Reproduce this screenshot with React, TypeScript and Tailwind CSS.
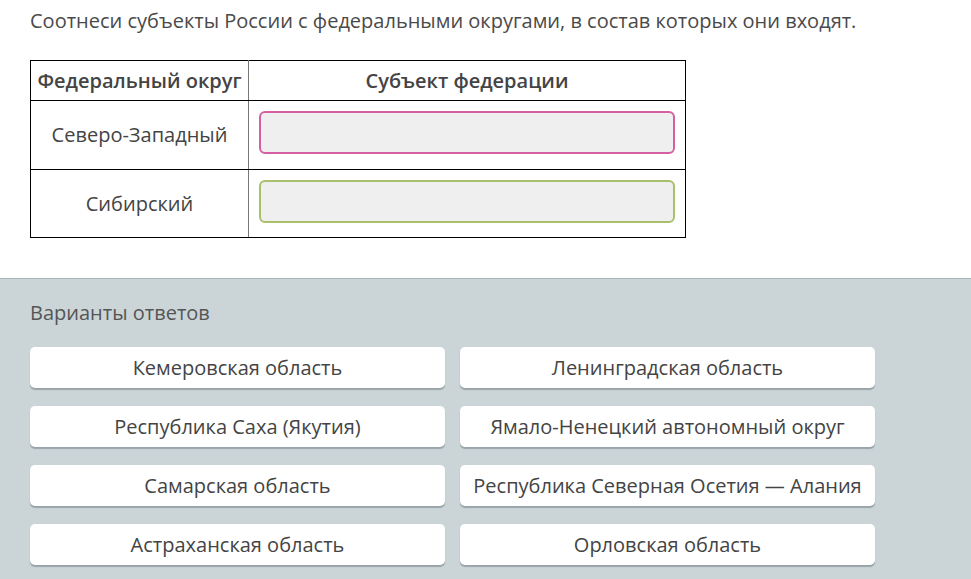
const options: [string, string][] = [
  ["Кемеровская область", "Ленинградская область"],
  ["Республика Саха (Якутия)", "Ямало-Ненецкий автономный округ"],
  ["Самарская область", "Республика Северная Осетия — Алания"],
  ["Астраханская область", "Орловская область"],
];

function Option({ label }: { label: string }) {
  return (
    <div className="h-[41px] w-[415px] flex items-center justify-center bg-white rounded-[5px] shadow-[0_2px_1px_rgba(90,105,110,0.45)] text-[20px] text-[#444] whitespace-nowrap">
      {label}
    </div>
  );
}

export default function App() {
  return (
    <div className="w-[971px] h-[579px] overflow-hidden bg-white font-['Open_Sans',sans-serif] text-[#444]">
      <div className="px-[30px] pt-[7px] h-[278px]">
        <p className="text-[20px] leading-[28px] text-[#4a4a4a] whitespace-nowrap">
          Соотнеси субъекты России с федеральными округами, в состав которых они входят.
        </p>
        <table className="mt-[25px] border-collapse text-[20px]">
          <tbody>
            <tr className="h-[40px]">
              <th className="w-[218px] border border-black border-r-[#777] font-semibold text-[#444] p-0 whitespace-nowrap">Федеральный округ</th>
              <th className="w-[437px] border border-black font-semibold text-[#444] p-0">Субъект федерации</th>
            </tr>
            <tr className="h-[69px]">
              <td className="border border-black border-r-[#777] text-center p-0">Северо-Западный</td>
              <td className="border border-black align-top pl-[10px] pr-[10px] pt-[10px] pb-0">
                <div className="h-[43px] w-[416px] rounded-[6px] bg-[#efefef] border-2 border-[#d65fa3]" />
              </td>
            </tr>
            <tr className="h-[68px]">
              <td className="border border-black border-r-[#777] text-center p-0">Сибирский</td>
              <td className="border border-black align-top pl-[10px] pr-[10px] pt-[10px] pb-0">
                <div className="h-[43px] w-[416px] rounded-[6px] bg-[#efefef] border-2 border-[#a8c06a]" />
              </td>
            </tr>
          </tbody>
        </table>
      </div>
      <div className="h-[301px] bg-[#cbd5d7] border-t border-[#a9b5b8] px-[30px] pt-[20px]">
        <p className="text-[20px] leading-[28px] text-[#555]">Варианты ответов</p>
        <div className="mt-[20px] flex flex-col gap-[18px]">
          {options.map(([a, b]) => (
            <div key={a} className="flex gap-[15px]">
              <Option label={a} />
              <Option label={b} />
            </div>
          ))}
        </div>
      </div>
    </div>
  );
}
